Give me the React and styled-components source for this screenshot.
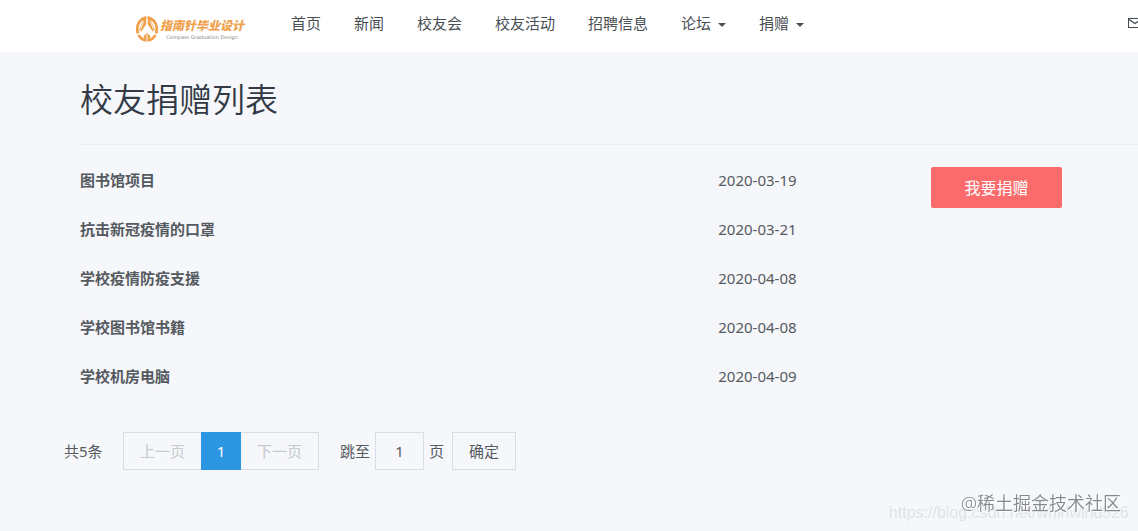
import { useState } from "react";
import styled, { createGlobalStyle } from "styled-components";

const DONATIONS = [
   { title: "图书馆项目", date: "2020-03-19" },
   { title: "抗击新冠疫情的口罩", date: "2020-03-21" },
   { title: "学校疫情防疫支援", date: "2020-04-08" },
   { title: "学校图书馆书籍", date: "2020-04-08" },
   { title: "学校机房电脑", date: "2020-04-09" },
]

const LINKS = [
   { label: "首页" },
   { label: "新闻" },
   { label: "校友会" },
   { label: "校友活动" },
   { label: "招聘信息" },
   { label: "论坛", menu: true },
   { label: "捐赠", menu: true },
]

const Logo = () => (
   <LogoStyle href="#">
      <svg width="24" height="28" viewBox="0 0 24 28" aria-hidden="true">
         <ellipse
            cx="12" cy="14" rx="9.8" ry="11.4"
            fill="none" stroke="#f0a04b" strokeWidth="2.6"
         />
         <path d="M11.4 3 V9 L6 17 L5.4 14.5 L3.6 16 L8 5 Z" fill="#f0a04b" />
         <path d="M12.6 3 V9 L18 17 L18.6 14.5 L20.4 16 L16 5 Z" fill="#f0a04b" />
         <path d="M12 18 L15.5 21 L13.5 26 H10.5 L8.5 21 Z" fill="#f0a04b" />
         <g fill="none" stroke="white">
            <path d="M12 1 V9 M12 19 V27" strokeWidth="0.9" />
            <path d="M8.6 6 L5.6 14 M15.4 6 L18.4 14" strokeWidth="0.9" />
            <path d="M0 20.5 L5 18.5 M24 20.5 L19 18.5" strokeWidth="1.4" />
         </g>
      </svg>
      <LogoText>
         <strong>指南针毕业设计</strong>
         <small>Compass Graduation Design</small>
      </LogoText>
   </LogoStyle>
)

const Pagination = ({ total }) => {
   const [page, setPage] = useState("1")

   return (
      <PaginationStyle>
         <Total>共{total}条</Total>
         <PageGroup>
            <PageBtn disabled>上一页</PageBtn>
            <CurrentPage aria-current="page">1</CurrentPage>
            <PageBtn disabled>下一页</PageBtn>
         </PageGroup>
         <Jump>
            <label htmlFor="page">跳至</label>
            <PageInput id="page" value={page} onChange={(e) => setPage(e.target.value)} />
            <span>页</span>
         </Jump>
         <PageBtn>确定</PageBtn>
      </PaginationStyle>
   )
}

const App = () => (
   <>
      <GlobalStyle />
      <Navbar>
         <Logo />
         <Nav>
            {LINKS.map(({ label, menu }) => (
               <NavLink href="#" key={label}>
                  {label}
                  {menu && <Caret />}
               </NavLink>
            ))}
         </Nav>
         <MailLink href="#" aria-label="邮件">
            <svg width="14" height="10" viewBox="0 0 14 10" aria-hidden="true">
               <rect x="0.5" y="0.5" width="13" height="9" fill="none" stroke="#444a50" />
               <path d="M1 1.5 L7 5.5 L13 1.5" fill="none" stroke="#444a50" strokeWidth="1.4" />
            </svg>
         </MailLink>
      </Navbar>
      <Main>
         <Title>校友捐赠列表</Title>
         <Content>
            <Table>
               <tbody>
                  {DONATIONS.map(({ title, date }) => (
                     <tr key={title}>
                        <TitleCell><a href="#">{title}</a></TitleCell>
                        <DateCell>{date}</DateCell>
                     </tr>
                  ))}
               </tbody>
            </Table>
            <aside>
               <DonateBtn>我要捐赠</DonateBtn>
            </aside>
         </Content>
         <Pagination total={DONATIONS.length} />
      </Main>
      <Watermark>
         <SourceUrl>https://blog.csdn.net/whirlwind526</SourceUrl>
         <Community>@稀土掘金技术社区</Community>
      </Watermark>
   </>
)

// styles
const GlobalStyle = createGlobalStyle`
   * {
      box-sizing: border-box;
   }

   body {
      margin: 0;
      overflow-x: hidden;
      background: #f5f7fb;
      color: #555a60;
      font: 15px/24px "Noto Sans", "Noto Sans CJK SC", sans-serif;
   }

   a {
      color: inherit;
      text-decoration: none;
   }

   button, input {
      font: inherit;
      color: inherit;
   }
`

const Navbar = styled.header`
   display: flex;
   align-items: center;
   height: 52px;
   padding-left: 135px;
   overflow: hidden;
   background: white;
`

const LogoStyle = styled.a`
   display: flex;
   align-items: center;
   gap: 1px;
   width: 156px;
   padding-top: 5px;
`

const LogoText = styled.span`
   display: flex;
   flex-direction: column;
   align-items: center;
   padding-top: 2px;

   & > strong {
      color: #f0a04b;
      font-size: 12px;
      font-weight: 900;
      font-style: italic;
      line-height: 14px;
   }

   & > small {
      color: #8b8680;
      font: 5px/8px "DejaVu Sans", sans-serif;
   }
`

const Nav = styled.nav`
   display: flex;
   flex-grow: 1;
   gap: 33px;
   padding-bottom: 6px;
`

const NavLink = styled.a`
   display: flex;
   align-items: center;
   gap: 7px;
   color: #4a4f55;
   white-space: nowrap;
`

const Caret = styled.span`
   margin-top: 3px;
   border: 4px solid transparent;
   border-top-color: currentColor;
   border-bottom: none;
`

const MailLink = styled.a`
   display: flex;
   flex-shrink: 0;
   margin-right: -4px;
   padding-bottom: 6px;
`

const Main = styled.main`
   padding: 24px 0 24px 80px;
`

const Title = styled.h1`
   margin: 0;
   padding-bottom: 20px;
   border-bottom: 1px solid #ebedf1;
   color: #333a45;
   font-size: 33px;
   font-weight: 350;
   line-height: 48px;
`

const Content = styled.div`
   display: grid;
   grid-template-columns: 1fr 207px;
   padding-top: 10px;
`

const Table = styled.table`
   width: 100%;
   border-collapse: collapse;
   table-layout: fixed;
`

const TitleCell = styled.td`
   width: 75%;
   height: 49px;
   padding: 0;
   font-weight: 700;
`

const DateCell = styled.td`
   padding: 0;
`

const DonateBtn = styled.button`
   width: 131px;
   height: 41px;
   margin-top: 12px;
   border: none;
   border-radius: 2px;
   background: #fb6b6b;
   color: white;
   font-size: 16px;
   cursor: pointer;
`

const PaginationStyle = styled.div`
   display: flex;
   align-items: center;
   margin: 32px 0 0 -16px;
`

const Total = styled.span`
   width: 59px;
`

const PageGroup = styled.div`
   display: flex;
   margin-right: 21px;
`

const PageBtn = styled.button`
   height: 38px;
   padding: 0 16px;
   border: 1px solid #d9dce2;
   background: transparent;
   white-space: nowrap;
   cursor: pointer;

   &:disabled {
      color: #c6c9cd;
      cursor: not-allowed;
   }
`

const CurrentPage = styled.button`
   z-index: 1;
   width: 40px;
   height: 38px;
   margin: 0 -1px;
   border: none;
   background: #2d96e3;
   color: white;
`

const Jump = styled.div`
   display: flex;
   align-items: center;
   gap: 5px;
   margin-right: 8px;
`

const PageInput = styled.input`
   width: 49px;
   height: 38px;
   padding: 0;
   border: 1px solid #d9dce2;
   background: transparent;
   text-align: center;
`

const Watermark = styled.div`
   position: fixed;
   right: 9px;
   bottom: 6px;
   pointer-events: none;
`

const SourceUrl = styled.span`
   color: #dfe2e6;
   font: 16px/24px "Liberation Sans", sans-serif;
`

const Community = styled.span`
   position: absolute;
   right: 8px;
   bottom: 10px;
   color: #85888c;
   font-size: 18px;
   font-weight: 350;
   white-space: nowrap;
   text-shadow: 1px 1px 0 white;
`

export default App;
